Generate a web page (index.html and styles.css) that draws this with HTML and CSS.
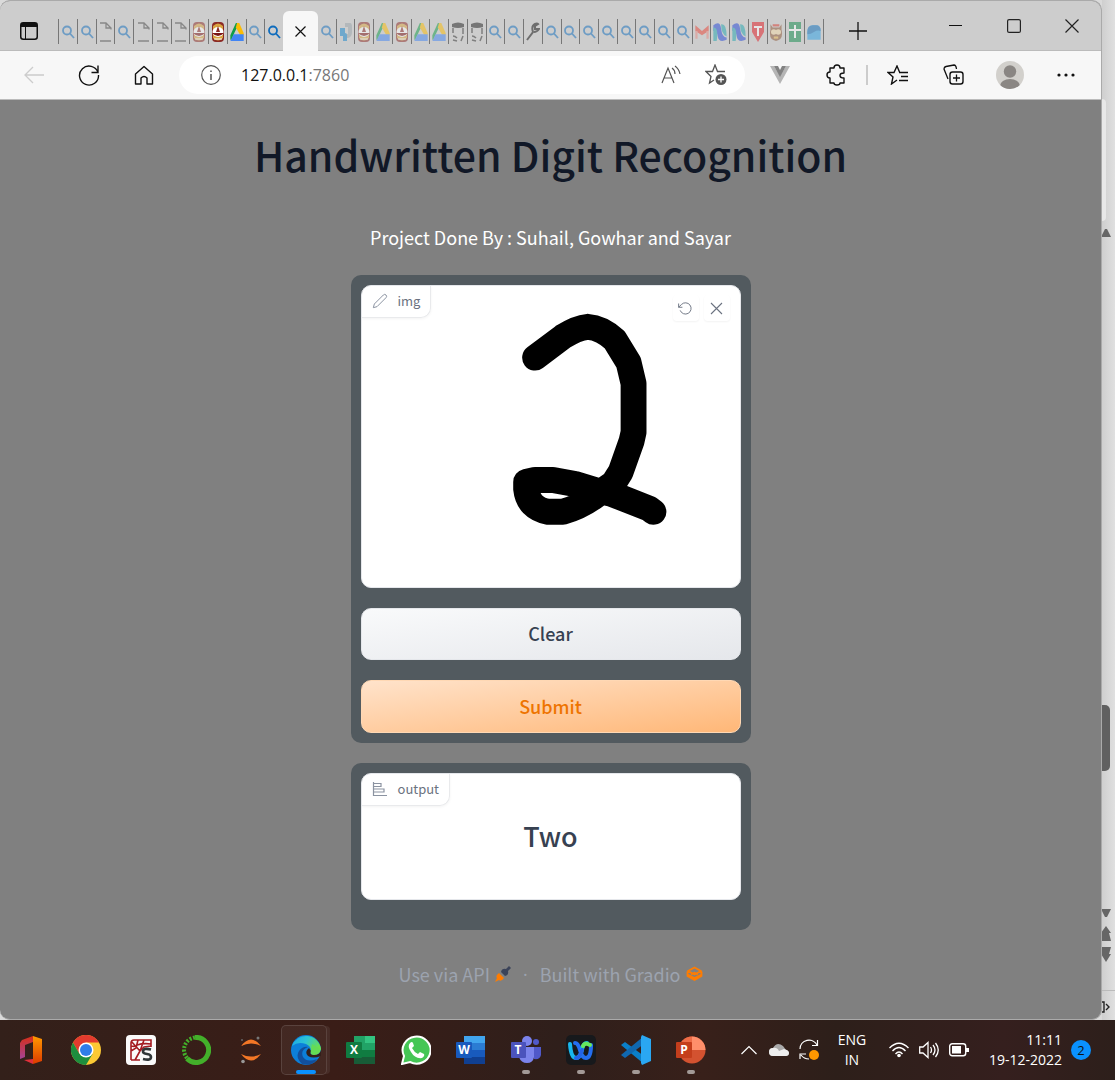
FILE: index.html
```html
<!DOCTYPE html>
<html lang="en">
<head>
<meta charset="utf-8">
<title>Handwritten Digit Recognition</title>
<link rel="stylesheet" href="styles.css">
</head>
<body>
<svg class="sprite" aria-hidden="true">
  <symbol id="search" viewBox="0 0 14 18"><g fill="none" stroke="#0f6cbd" stroke-width="1.8"><circle cx="6" cy="7.500" r="4"/><path d="M9 10.500l4 4.500"/></g></symbol>
  <symbol id="file" viewBox="0 0 14 20"><path d="M2 1h6l5 5v1.500M8 1v5h5M2 19h11" fill="none" stroke="#444" stroke-width="1.300"/></symbol>
  <symbol id="temple" viewBox="0 0 12 20"><rect width="12" height="20" rx="4" fill="#8c2a25"/><path d="M1 4q5-5 10 0v12q-5 5-10 0z" fill="#d9a441"/><ellipse cx="6" cy="10" rx="5.500" ry="5" fill="#fff"/><path d="M0 11h12q-6 6-12 0z" fill="#7a1414"/><path d="M6 4l2 6H4z" fill="#8c2a25"/><path d="M2 17h8" stroke="#fff"/></symbol>
  <symbol id="drive" viewBox="0 0 12 18"><path d="M5 1h3L4 9 1 16H0V12z" fill="#0f9d48"/><path d="M6 1h2l4 9v2H9L5 5z" fill="#fbbc04"/><path d="M3 11h9v6H0z" fill="#4285f4"/></symbol>
  <symbol id="python" viewBox="0 0 14 20"><path d="M6 1h5q2 0 2 4v5q0 5-4 6H6v-4h3V5H6z" fill="#9aa4ab"/><path d="M1 6h5v5q2 0 2 2v6H4v-5H1z" fill="#1485cc"/></symbol>
  <symbol id="agent" viewBox="0 0 14 20"><path d="M1 2q6-3 12 0v3q-6 2-12 0z" fill="#222"/><path d="M2 6v5M12 6v6M2 14q2 0 4 2M12 14l-2 5M2 18l4 1" fill="none" stroke="#333" stroke-width="1.500"/></symbol>
  <symbol id="wrench" viewBox="0 0 14 20"><path d="M1 18l6-8q-2-6 2-8 2-1 3 0l-3 2v3l4 0q-2 3-5 3" fill="none" stroke="#111" stroke-width="2"/></symbol>
  <symbol id="mail" viewBox="0 0 12 18"><path d="M0 3l6 5 6-5v5l-6 4-6-4z" fill="#ea4335"/><path d="M1 8v7M11 8v7" stroke="#e88a82" stroke-width="2"/></symbol>
  <symbol id="ribbon" viewBox="0 0 12 18"><path d="M0 3q6-5 7 3t5 8v2q-7 3-8-3T0 8z" fill="#2447d8"/><path d="M0 5q5 0 3 12H0M7 2q5-1 5 11-5-2-5-11" fill="#21a7b0"/></symbol>
  <symbol id="tfav" viewBox="0 0 12 20"><path d="M0 0h12v10l-6 10L0 10z" fill="#e21b23"/><path d="M2 5h8M6 5v9" stroke="#fff" stroke-width="2"/></symbol>
  <symbol id="owl" viewBox="0 0 12 18"><path d="M1 2l2 3h6l2-3v5q2 9-5 10-7-1-5-10z" fill="#8c5635"/><circle cx="4" cy="9" r="2.500" fill="#f3d9a8"/><circle cx="8" cy="9" r="2.500" fill="#f3d9a8"/><path d="M3 3h6" stroke="#d83b2e" stroke-width="2"/><path d="M4 14h4" stroke="#e9b44c" stroke-width="2"/></symbol>
  <symbol id="sheet" viewBox="0 0 12 20"><path d="M0 0h12v20H0z" fill="#108a4c"/><path d="M6 3v13M0 8h12" stroke="#fff" stroke-width="2"/></symbol>
  <symbol id="wave" viewBox="0 0 12 18"><path d="M0 9q0-6 5-6h3q4 0 4 5v8H0z" fill="#2aa0e8"/><path d="M0 9q0-6 5-6h3q4 0 4 5-3-1-6 1T0 11z" fill="#0b6cbb"/></symbol>
</svg>

<div class="desktop">
  <div class="browser">
    <header class="tabbar">
      <button class="tab-actions" aria-label="Tab actions"><svg width="18" height="18" viewBox="0 0 18 18"><rect x=".75" y=".75" width="16.500" height="16.500" rx="2.500" fill="none" stroke="#111" stroke-width="1.500"/><path d="M1 1h16v4H1z" fill="#111"/><path d="M5.500 5v12" stroke="#111"/></svg></button>
      <div class="tabs tabs-before">
        <button class="tab" aria-label="Tab"><svg><use href="#search"/></svg></button>
        <button class="tab" aria-label="Tab"><svg><use href="#search"/></svg></button>
        <button class="tab" aria-label="Tab"><svg><use href="#file"/></svg></button>
        <button class="tab" aria-label="Tab"><svg><use href="#search"/></svg></button>
        <button class="tab" aria-label="Tab"><svg><use href="#file"/></svg></button>
        <button class="tab" aria-label="Tab"><svg><use href="#file"/></svg></button>
        <button class="tab" aria-label="Tab"><svg><use href="#file"/></svg></button>
        <button class="tab" aria-label="Tab"><svg><use href="#temple"/></svg></button>
        <button class="tab awake" aria-label="Tab"><svg><use href="#temple"/></svg></button>
        <button class="tab awake" aria-label="Tab"><svg><use href="#drive"/></svg></button>
        <button class="tab" aria-label="Tab"><svg><use href="#search"/></svg></button>
        <button class="tab awake" aria-label="Tab"><svg><use href="#search"/></svg></button>
      </div>
      <button class="tab-active" aria-label="Close tab"><svg width="11" height="11" viewBox="0 0 11 11"><path d="M.5.5l10 10M10.500.5l-10 10" stroke="#111" stroke-width="1.200"/></svg></button>
      <div class="tabs tabs-after">
        <button class="tab" aria-label="Tab"><svg><use href="#search"/></svg></button>
        <button class="tab" aria-label="Tab"><svg><use href="#python"/></svg></button>
        <button class="tab" aria-label="Tab"><svg><use href="#temple"/></svg></button>
        <button class="tab" aria-label="Tab"><svg><use href="#drive"/></svg></button>
        <button class="tab" aria-label="Tab"><svg><use href="#temple"/></svg></button>
        <button class="tab" aria-label="Tab"><svg><use href="#drive"/></svg></button>
        <button class="tab" aria-label="Tab"><svg><use href="#drive"/></svg></button>
        <button class="tab" aria-label="Tab"><svg><use href="#agent"/></svg></button>
        <button class="tab" aria-label="Tab"><svg><use href="#agent"/></svg></button>
        <button class="tab" aria-label="Tab"><svg><use href="#search"/></svg></button>
        <button class="tab" aria-label="Tab"><svg><use href="#search"/></svg></button>
        <button class="tab" aria-label="Tab"><svg><use href="#wrench"/></svg></button>
        <button class="tab" aria-label="Tab"><svg><use href="#search"/></svg></button>
        <button class="tab" aria-label="Tab"><svg><use href="#search"/></svg></button>
        <button class="tab" aria-label="Tab"><svg><use href="#search"/></svg></button>
        <button class="tab" aria-label="Tab"><svg><use href="#search"/></svg></button>
        <button class="tab" aria-label="Tab"><svg><use href="#search"/></svg></button>
        <button class="tab" aria-label="Tab"><svg><use href="#search"/></svg></button>
        <button class="tab" aria-label="Tab"><svg><use href="#search"/></svg></button>
        <button class="tab" aria-label="Tab"><svg><use href="#search"/></svg></button>
        <button class="tab" aria-label="Tab"><svg><use href="#mail"/></svg></button>
        <button class="tab" aria-label="Tab"><svg><use href="#ribbon"/></svg></button>
        <button class="tab" aria-label="Tab"><svg><use href="#ribbon"/></svg></button>
        <button class="tab" aria-label="Tab"><svg><use href="#tfav"/></svg></button>
        <button class="tab" aria-label="Tab"><svg><use href="#owl"/></svg></button>
        <button class="tab" aria-label="Tab"><svg><use href="#sheet"/></svg></button>
        <button class="tab" aria-label="Tab"><svg><use href="#wave"/></svg></button>
      </div>
      <button class="new-tab" aria-label="New tab"><svg width="18" height="18" viewBox="0 0 18 18"><path d="M9 0v18M0 9h18" stroke="#111" stroke-width="1.300"/></svg></button>
      <div class="window-buttons">
        <button aria-label="Minimize"><svg width="14" height="14" viewBox="0 0 14 14"><path d="M0 6.500h13" stroke="#111"/></svg></button>
        <button aria-label="Maximize"><svg width="14" height="14" viewBox="0 0 14 14"><rect x=".6" y=".6" width="12.800" height="12.800" rx="1.500" fill="none" stroke="#222" stroke-width="1.200"/></svg></button>
        <button aria-label="Close"><svg width="14" height="14" viewBox="0 0 14 14"><path d="M.5.5l13 13M13.500.5l-13 13" stroke="#222" stroke-width="1.200"/></svg></button>
      </div>
    </header>

    <nav class="toolbar">
      <button class="tool" aria-label="Back"><svg width="22" height="22" viewBox="0 0 22 22"><path d="M21 11H2M10 3l-8 8 8 8" fill="none" stroke="#ccc" stroke-width="1.300"/></svg></button>
      <button class="tool" aria-label="Refresh"><svg width="22" height="22" viewBox="0 0 22 22"><path d="M20 8.500A9.500 9.500 0 1 0 20.500 11M20 1.500v7h-6.500" fill="none" stroke="#111" stroke-width="1.400"/></svg></button>
      <button class="tool" aria-label="Home"><svg width="20" height="20" viewBox="0 0 20 20"><path d="M1.500 18V9L10 1.500 18.500 9v10H13v-6q-3-3-6 0v6H1.500z" fill="none" stroke="#111" stroke-width="1.400" stroke-linejoin="round"/></svg></button>
      <div class="address">
        <svg width="20" height="20" viewBox="0 0 20 20"><circle cx="10" cy="10" r="9.300" fill="none" stroke="#555" stroke-width="1.200"/><path d="M10 9v6M10 5.500V7" stroke="#555" stroke-width="1.500"/></svg>
        <span class="url">127.0.0.1<span class="port">:7860</span></span>
        <button class="read" aria-label="Read aloud"><svg width="20" height="20" viewBox="0 0 20 20"><path d="M1 18L7 3l6 15M3 13h8M11 3q3 2 3 6M14 1q4 3 5 8" fill="none" stroke="#555" stroke-width="1.200"/></svg></button>
        <button class="star" aria-label="Add to favorites"><svg width="22" height="22" viewBox="0 0 22 22"><path d="M9 16l-4.500 3 1.500-6.500L1 7.500h6.500L10 1l2.500 6.500H20" fill="none" stroke="#555" stroke-width="1.300"/><circle cx="16" cy="15.500" r="5.500" fill="#555"/><path d="M16 12.500v6M13 15.500h6" stroke="#fff" stroke-width="1.300"/></svg></button>
      </div>
      <div class="extensions">
        <button class="tool" aria-label="Vue"><svg width="20" height="18" viewBox="0 0 20 18"><path d="M0 0h4l6 10 6-10h4L10 18z" fill="#b5b5b5"/><path d="M4 0h4l2 4 2-4h4l-6 11z" fill="#828282"/></svg></button>
        <button class="tool" aria-label="Extensions"><svg width="20" height="22" viewBox="0 0 20 22"><path d="M6 4h2q0-3 3-3t3 3h4v5q-4 0-4 2.500t4 2.500v5h-4q0 2-3 2t-3-2H4v-5q-3 0-3-3t3-3V4z" fill="none" stroke="#111" stroke-width="1.400" stroke-linejoin="round"/></svg></button>
        <span class="divider"></span>
        <button class="tool" aria-label="Favorites"><svg width="22" height="20" viewBox="0 0 22 20"><path d="M10 15l-5.500 4 1.500-7L1 7.500h6L10 1l2.500 6M12 7.500h9M14 11.500h7M12 15.500h9" fill="none" stroke="#111" stroke-width="1.400"/></svg></button>
        <button class="tool" aria-label="Collections"><svg width="22" height="22" viewBox="0 0 22 22"><rect x="7" y="8" width="13" height="12" rx="2.500" fill="none" stroke="#111" stroke-width="1.400"/><path d="M13.500 10.500v7M10 14h7M5 15L1 5q0-2 2-2.500L11 1q2 0 2.500 4" fill="none" stroke="#111" stroke-width="1.300"/></svg></button>
        <button class="tool" aria-label="Profile"><svg width="28" height="28" viewBox="0 0 28 28"><clipPath id="face"><circle cx="14" cy="14" r="14"/></clipPath><g clip-path="url(#face)"><path d="M0 0h28v28H0z" fill="#d2d0cc"/><circle cx="14" cy="10.500" r="6.200" fill="#8a8683"/><ellipse cx="14" cy="25" rx="10" ry="7" fill="#8a8683"/></g></svg></button>
        <button class="tool" aria-label="Settings and more"><svg width="18" height="4" viewBox="0 0 18 4" fill="#111"><circle cx="2" cy="2" r="1.600"/><circle cx="9" cy="2" r="1.600"/><circle cx="16" cy="2" r="1.600"/></svg></button>
      </div>
    </nav>

    <main class="page">
      <h1>Handwritten Digit Recognition</h1>
      <p class="authors">Project Done By : Suhail, Gowhar and Sayar</p>
      <section class="panel">
        <div class="sketch">
          <svg class="drawing" viewBox="0 0 380 303" role="img" aria-label="Drawn digit"><path d="M174 72L202 51Q216 42 227 41 241 42 254 54L268 77 273 98V147L271 156 260 187 253 198 236 210Q220 222 202 227H187Q167 223 165 204V197L174 195H192L214 199 237 206 251 209 289 224 293 227" fill="none" stroke="#000" stroke-width="26" stroke-linejoin="round" stroke-linecap="round"/></svg>
          <div class="chip"><svg width="16" height="16" viewBox="0 0 24 24"><path d="M17 3a2.828 2.828 0 1 1 4 4L7.500 20.500 2 22l1.500-5.500L17 3z" fill="none" stroke="#8b93a1" stroke-width="1.500"/></svg>img</div>
          <div class="sketch-tools">
            <button aria-label="Undo"><svg width="15" height="15" viewBox="0 0 24 24"><path d="M1 4v6h6M3.500 15a9 9 0 1 0 2-9.400L1 10" fill="none" stroke="#6b7280" stroke-width="1.500"/></svg></button>
            <button aria-label="Clear drawing"><svg width="13" height="13" viewBox="0 0 13 13"><path d="M1 1l11 11M12 1L1 12" stroke="#6b7280" stroke-width="1.100"/></svg></button>
          </div>
        </div>
        <button class="action clear">Clear</button>
        <button class="action submit">Submit</button>
      </section>
      <section class="panel result">
        <div class="output">
          <div class="chip"><svg width="16" height="16" viewBox="0 0 16 16"><path d="M1.500 1v13.500H15M2 2.500h7v3H2M2 8h10v3H2" fill="none" stroke="#8b93a1" stroke-width="1.200"/></svg>output</div>
          <strong>Two</strong>
        </div>
      </section>
      <footer class="credits">
        <a href="#api">Use via API <svg width="16" height="16" viewBox="0 0 16 16"><path d="M0 16l2-4q-2-2 2-5l5 5q-3 4-5 2z" fill="#ff7c00"/><path d="M6 6q1-4 5-3l3-3 2 2-3 3q1 4-3 5z" fill="#3b4359"/></svg></a>
        <span class="dot">·</span>
        <a href="#gradio">Built with Gradio <svg width="17" height="16" viewBox="0 0 17 16"><path d="M8.500 1.500L15 5 8.500 8.500 2 5zM1.500 5.500v4.500l7 4 7-4V5.500M1.500 8.500L8.500 12l7-3.500" fill="none" stroke="#ff7c00" stroke-width="1.800" stroke-linejoin="round"/><path d="M5 8.500l3.500-2 3.500 2" fill="none" stroke="#ff7c00" stroke-width="1.500"/></svg></a>
      </footer>
    </main>
  </div>

  <aside class="behind" aria-hidden="true">
    <div class="sheet-edge"></div>
    <svg class="up" width="10" height="8" viewBox="0 0 10 8"><path d="M3 0h2l4 8H-1z" fill="#666"/></svg>
    <div class="thumb"></div>
    <svg class="jumps" width="10" height="54" viewBox="0 0 10 54" fill="#666"><path d="M-1 0H9L5 8H3zM4 17l5 7H7l2 8H-1v-8zM-1 38H9l-2 7h2l-5 8-5-8z"/></svg>
    <div class="status"><svg width="8" height="12" viewBox="0 0 8 12"><path d="M0 1h2v10H0M4 3l3 3-3 3" fill="none" stroke="#222" stroke-width="1.400"/></svg></div>
  </aside>
</div>

<footer class="taskbar">
  <div class="apps">
    <button class="app" aria-label="Office"><svg width="30" height="30" viewBox="0 0 30 30"><defs><linearGradient id="off" x2="0" y2="1"><stop stop-color="#d72f18"/><stop offset="1" stop-color="#a54396"/></linearGradient><linearGradient id="off2" x2="0" y2="1"><stop stop-color="#ff9a00"/><stop offset="1" stop-color="#dc3a00"/></linearGradient></defs><path d="M17 1L6 5 4 8v16l5-2V10l8-3z" fill="url(#off)"/><path d="M17 1l9 3v22l-9 3z" fill="url(#off2)"/><path d="M8 25l9-1v5z" fill="#e0303b"/></svg></button>
    <button class="app" aria-label="Chrome"><svg width="30" height="30" viewBox="0 0 30 30"><circle cx="15" cy="15" r="15" fill="#fcc934"/><path d="M2 7.500A15 15 0 0 1 28 7.500H15L8.500 19z" fill="#e33b2e"/><path d="M2 7.500A15 15 0 0 0 15 30l6.500-11H8.500z" fill="#1e8e3e"/><circle cx="15" cy="15" r="7.500" fill="#fff"/><circle cx="15" cy="15" r="6" fill="#2f7de9"/></svg></button>
    <button class="app" aria-label="Spyder"><svg width="30" height="30" viewBox="0 0 30 30"><rect width="30" height="30" rx="4" fill="#fafafa"/><path d="M5 25V8q0-3 3-3h17v7M5 25h9M5 6l9 10M12 5l-2 8-5 3M14 16l-5 9M14 16l4-11M14 16l4-4 7-1M5 11q5 1 6-1 6-2 14-1" fill="none" stroke="#a51c22" stroke-width="1.600"/><path d="M25 14.500q-8-2-8 2 0 2 4 2.500t4 3q0 4-8 2" fill="none" stroke="#303638" stroke-width="2.600"/></svg></button>
    <button class="app" aria-label="Anaconda"><svg width="30" height="30" viewBox="0 0 30 30" fill="none" stroke="#43b02a"><path d="M14 2.500a12.500 12.500 0 1 1-8 21" stroke-width="5"/><path d="M6 23A12.500 12.500 0 0 1 14 2.500" stroke-width="4" stroke-dasharray="2 1.500"/></svg></button>
    <button class="app" aria-label="Jupyter"><svg width="30" height="30" viewBox="0 0 30 30"><path d="M5 11q10-13 20 0-10-5-20 0zM5 19q10 13 20 0-10 5-20 0z" fill="#f37726"/><circle cx="22" cy="3" r="1.500" fill="#777"/><circle cx="7" cy="26.500" r="1.800" fill="#999"/><circle cx="6" cy="5" r="1" fill="#666"/></svg></button>
    <button class="app current" aria-label="Edge"><svg width="30" height="30" viewBox="0 0 30 30"><defs><linearGradient id="edge1" x2="1" y2=".4"><stop stop-color="#1ba6e8"/><stop offset=".5" stop-color="#2cc3d5"/><stop offset="1" stop-color="#6be04e"/></linearGradient></defs><circle cx="15" cy="15" r="15" fill="#0c7fd9"/><path d="M1 11A15 15 0 0 1 30 14q-1 6-7 6-5 0-3-4 0-5-5-7Q7 6 1 11z" fill="url(#edge1)"/><path d="M17 12q-8 3-5 10 4 6 14 2-5 8-15 5-7-7-3-13 4-5 9-4z" fill="#124f9c"/><path d="M18 13q-5 4-1 8 5 3 13 0V15q-1 5-7 5-5 0-3-4z" fill="#34201b"/><path d="M29 14q-1 6-7 5-3-1-2-4l1-6z" fill="#64dc55"/></svg></button>
    <button class="app" aria-label="Excel"><svg width="30" height="30" viewBox="0 0 30 30"><path d="M8 1h21v28H8z" fill="#185c37"/><path d="M8 1h11v14H8z" fill="#21a366"/><path d="M19 1h10v7H19z" fill="#33c481"/><path d="M19 8h10v7H19z" fill="#21a366"/><path d="M8 15h21v7H8z" fill="#107c41"/><rect y="7" width="16" height="16" rx="1" fill="#107c41"/><text x="8" y="19" class="glyph">X</text></svg></button>
    <button class="app" aria-label="WhatsApp"><svg width="30" height="30" viewBox="0 0 30 30"><path d="M1 29l2-8A14 13.500 0 1 1 9 27z" fill="#45c655" stroke="#fff" stroke-width="2"/><path d="M9 8q2-2 3 0l1 3-2 2q2 4 6 6l2-2 4 2q1 2-2 4-7 1-11-6-4-6-1-9z" fill="#fff"/></svg></button>
    <button class="app" aria-label="Word"><svg width="30" height="30" viewBox="0 0 30 30"><path d="M8 1h21v28H8z" fill="#103f91"/><path d="M8 1h21v7H8z" fill="#41a5ee"/><path d="M8 8h21v7H8z" fill="#2b7cd3"/><path d="M8 15h21v7H8z" fill="#185abd"/><rect y="7" width="16" height="16" rx="1" fill="#185abd"/><text x="8" y="19" class="glyph">W</text></svg></button>
    <button class="app running" aria-label="Teams"><svg width="30" height="30" viewBox="0 0 30 30"><circle cx="25" cy="7" r="3" fill="#5059c9"/><path d="M19 12h11v8q-1 5-7 4z" fill="#5059c9"/><circle cx="16" cy="6" r="5" fill="#7b83eb"/><path d="M8 12h15v10q-1 6-7 6t-8-6z" fill="#7b83eb"/><rect y="7" width="15" height="16" rx="1" fill="#4b53bc"/><text x="7" y="19" class="glyph">T</text></svg></button>
    <button class="app running" aria-label="Webex"><svg width="30" height="30" viewBox="0 0 30 30"><rect width="30" height="30" rx="5" fill="#17191c"/><g fill="none" stroke-width="4" stroke-linecap="round"><path d="M25 10q0 13-5 13-4 0-6-8-2-7-5-7" stroke="#246ef0"/><path d="M4 9q1 14 6 14 4 0 6-8 1-7 5-7" stroke="#18b7ee"/><path d="M10 23q4 0 6-8" stroke="#2463e9"/><path d="M17 11q2-4 7-1" stroke="#67e75d"/></g></svg></button>
    <button class="app running" aria-label="Visual Studio Code"><svg width="30" height="30" viewBox="0 0 30 30"><path d="M0 10l4-3 19 14v8z" fill="#0a7fc9"/><path d="M0 20l4 3L23 9V1z" fill="#1068b0"/><path d="M21 0l9 4v22l-9 4-1-2V2z" fill="#2aa7f2"/></svg></button>
    <button class="app running" aria-label="PowerPoint"><svg width="30" height="30" viewBox="0 0 30 30"><circle cx="16" cy="15" r="13.500" fill="#d35230"/><path d="M16 1.500A13.500 13.500 0 0 0 2.500 15H16z" fill="#ed6c47"/><path d="M16 1.500A13.500 13.500 0 0 1 29.500 15H16z" fill="#ff8f6b"/><rect y="7" width="16" height="16" rx="1" fill="#c43e1c"/><text x="8" y="19" class="glyph">P</text></svg></button>
  </div>
  <div class="tray">
    <button class="status-icon" aria-label="Hidden icons"><svg width="16" height="10" viewBox="0 0 16 10"><path d="M.5 9L8 1.500 15.500 9" fill="none" stroke="#fff" stroke-width="1.200"/></svg></button>
    <button class="status-icon" aria-label="OneDrive"><svg width="20" height="14" viewBox="0 0 20 14"><path d="M4 13a4 4 0 0 1 0-8q4-7 10-2l3 4q3 1 3 3t-3 3z" fill="#aaa"/><path d="M4 13a4 4 0 0 1 0-8q4-1 6 3l5-2q5 1 5 4t-3 3z" fill="#eee"/></svg></button>
    <button class="status-icon" aria-label="Update"><svg width="20" height="22" viewBox="0 0 20 22"><path d="M1 10a9 9 0 0 1 17-4M18.500 1v5.500H13M1 20v-5h6M2 16q3 4 8 4" fill="none" stroke="#fff" stroke-width="1.200"/><circle cx="15" cy="16" r="5" fill="#ff9800"/></svg></button>
    <button class="lang">ENG<br>IN</button>
    <button class="status-icon" aria-label="Wi-Fi"><svg width="20" height="16" viewBox="0 0 20 16"><g fill="none" stroke="#fff" stroke-width="1.400"><path d="M.5 6q9.500-9.500 19 0M3.500 9q6.500-7 13 0M6.500 12q3.500-4 7 0"/></g><circle cx="10" cy="13.500" r="1.800" fill="#fff"/></svg></button>
    <button class="status-icon" aria-label="Volume"><svg width="20" height="18" viewBox="0 0 20 18"><path d="M.7 6H4l5-4.500v15L4 12H.7zM11.500 6q2 3 0 6M14 4q4 5 0 10M16.500 2q5.500 7 0 14" fill="none" stroke="#fff" stroke-width="1.300"/></svg></button>
    <button class="status-icon" aria-label="Battery"><svg width="20" height="14" viewBox="0 0 20 14"><rect x=".7" y=".7" width="16" height="12" rx="2.500" fill="none" stroke="#fff" stroke-width="1.400"/><path d="M3 3h9v7.500H3zM17 5h3v4h-3z" fill="#fff"/></svg></button>
    <button class="clock">11:11<br>19-12-2022</button>
    <button class="badge" aria-label="2 notifications">2</button>
  </div>
</footer>
</body>
</html>
```
FILE: styles.css
```css
* { box-sizing: border-box; }

body {
  margin: 0;
  min-height: 100vh;
  display: flex;
  flex-direction: column;
  background: #dadada;
  font-family: "Open Sans", "Noto Sans", sans-serif;
}

button {
  margin: 0;
  padding: 0;
  border: 0;
  background: none;
  color: inherit;
  font: inherit;
  display: flex;
  align-items: center;
  justify-content: center;
}

svg { display: block; flex: none; }

.sprite { position: absolute; width: 0; height: 0; }

.desktop { flex: 1; display: flex; }

.browser {
  flex: 1;
  min-width: 0;
  display: flex;
  flex-direction: column;
  border: 1px solid #aaa;
  border-left: 0;
  border-radius: 10px;
  overflow: hidden;
  background: #808080;
}

/* Tab strip */
.tabbar {
  height: 50px;
  display: flex;
  align-items: stretch;
  background: #cdcdcd;
  border-bottom: 1px solid #bbb;
}

.tab-actions { width: 58px; padding-top: 10px; }

.tabs { display: flex; align-items: center; padding-top: 12px; }
.tabs-before { width: 225px; }
.tabs-after { width: 506px; }

.tab { flex: 1; height: 25px; }
.tabs-before .tab { border-left: 1px solid #777; }
.tabs-after .tab { border-right: 1px solid #777; }
.tab svg { width: 14px; height: 20px; opacity: 0.5; }
.tab.awake svg { opacity: 1; }

.tab-active {
  width: 35px;
  margin: 10px 0 -1px;
  border-radius: 6px 6px 0 0;
  background: #f7f7f7;
}

.new-tab { width: 68px; padding-top: 10px; }

.window-buttons { display: flex; margin-left: auto; }
.window-buttons button { width: 58px; }

/* Toolbar */
.toolbar {
  height: 49px;
  display: flex;
  align-items: center;
  padding-left: 6px;
  background: #f7f7f7;
  border-bottom: 1px solid #bbb;
}

.tool { width: 55px; height: 40px; }

.address {
  flex: 1;
  height: 38px;
  display: flex;
  align-items: center;
  margin-left: 8px;
  padding: 0 18px 0 22px;
  border-radius: 19px;
  background: #fff;
}

.url { margin-left: 20px; font-size: 16px; line-height: 24px; color: #111; }
.port { color: #777; }
.read { margin-left: auto; margin-right: 24px; }

.extensions { display: flex; align-items: center; padding: 0 7px; }
.extensions .tool { width: 56px; }
.divider { width: 2px; height: 20px; margin: 0 2px; background: #ccc; }

/* Recognition page */
.page {
  flex: 1;
  display: flex;
  flex-direction: column;
  align-items: center;
  padding: 24px 20px 28px;
  font-family: "Noto Sans CJK SC", "Noto Sans", sans-serif;
}

h1 {
  margin: 0;
  font-size: 41px;
  line-height: 60px;
  font-weight: 500;
  color: #111827;
}

.authors { margin: 38px 0 23px; font-size: 18px; line-height: 30px; color: #fff; }

.panel {
  width: 400px;
  max-width: 100%;
  display: flex;
  flex-direction: column;
  gap: 20px;
  padding: 10px;
  border-radius: 10px;
  background: #525a5f;
}

.sketch,
.output {
  position: relative;
  border: 1px solid #e5e7eb;
  border-radius: 10px;
  background: #fff;
  overflow: hidden;
}

.drawing { width: 100%; height: auto; }

.chip {
  position: absolute;
  top: 0;
  left: 0;
  display: flex;
  align-items: center;
  gap: 10px;
  height: 32px;
  padding: 0 10px 2px;
  border-right: 1px solid #e9eaec;
  border-bottom: 1px solid #e9eaec;
  border-radius: 0 0 10px 0;
  box-shadow: 0 1px 3px #0000000d;
  font-size: 13px;
  line-height: 20px;
  color: #6b7280;
}

.sketch-tools { position: absolute; top: 9px; right: 10px; display: flex; gap: 5px; }
.sketch-tools button { width: 26px; height: 26px; border-radius: 4px; box-shadow: 0 1px 2px #0000000d; }

.action {
  height: 52px;
  padding-bottom: 2px;
  border-radius: 10px;
  font-size: 18px;
  line-height: 30px;
  font-weight: 500;
}

.clear { border: 1px solid #e5e7eb; background: linear-gradient(to bottom right, #f9fafb, #e5e7eb); color: #374151; }
.submit { height: 53px; border: 1px solid #ffd8b4; background: linear-gradient(to bottom right, #ffe3cb, #ffb777); color: #ee7400; }

.result { margin-top: 20px; padding-bottom: 30px; }

.output {
  display: flex;
  align-items: center;
  justify-content: center;
  height: 127px;
  padding-bottom: 2px;
}

.output strong { font-size: 27px; line-height: 40px; font-weight: 500; color: #374151; }

.credits {
  display: flex;
  gap: 12px;
  margin-top: 29px;
  font-size: 18px;
  line-height: 30px;
  color: #9ca3af;
}

.credits a { display: flex; align-items: center; gap: 5px; color: inherit; text-decoration: none; }
.dot { font-family: "Open Sans", sans-serif; }

/* Edge of the window that lies behind the browser */
.behind {
  width: 13px;
  display: flex;
  flex-direction: column;
  padding-top: 99px;
  background: linear-gradient(to right, #cfcfcf, #e0e0e0);
}

.sheet-edge { width: 4px; height: 122px; border-radius: 0 4px 4px 0; background: #e8e8e8; }
.up { margin-top: 8px; }
.thumb { width: 8px; height: 66px; margin: auto 0 138px; border-radius: 0 5px 5px 0; background: #606060; }
.status { height: 30px; margin-top: 27px; padding-top: 10px; border-top: 1px solid #bbb; }

/* Taskbar */
.taskbar {
  height: 60px;
  display: flex;
  justify-content: space-between;
  padding: 0 24px 0 3px;
  background: linear-gradient(to right, #33201a, #3a1d17 30%, #2f1f1b 50%, #38201a 63%, #2d1f1a 75%, #351f1e 90%, #2d1f1b);
  color: #fff;
}

.apps, .tray { display: flex; align-items: center; }

.app { position: relative; width: 55px; height: 60px; }

.app.current::before {
  content: "";
  position: absolute;
  inset: 5px 6px 5px 3px;
  border: 1px solid #ffffff1f;
  border-radius: 5px;
  background: #ffffff0d;
  box-shadow: 4px 0 0 -1px #ffffff12;
}

.app svg { position: relative; }

.app.current::after,
.app.running::after {
  content: "";
  position: absolute;
  bottom: 6px;
  left: 50%;
  width: 8px;
  height: 4px;
  border-radius: 2px;
  background: #a39a97;
  transform: translateX(-50%);
}

.app.current::after { width: 20px; background: #0a91ff; }

.glyph {
  font: bold 12px "Open Sans", sans-serif;
  fill: #fff;
  text-anchor: middle;
}

.status-icon { width: 30px; height: 40px; }
.lang { width: 56px; margin-right: 4px; font-size: 14px; line-height: 20px; text-align: center; }
.clock { margin-left: 15px; margin-right: 9px; font-size: 14px; line-height: 20px; text-align: right; }

.badge {
  width: 20px;
  height: 20px;
  border-radius: 50%;
  background: #0a91ff;
  color: #111;
  font-size: 13px;
  line-height: 20px;
}
```
